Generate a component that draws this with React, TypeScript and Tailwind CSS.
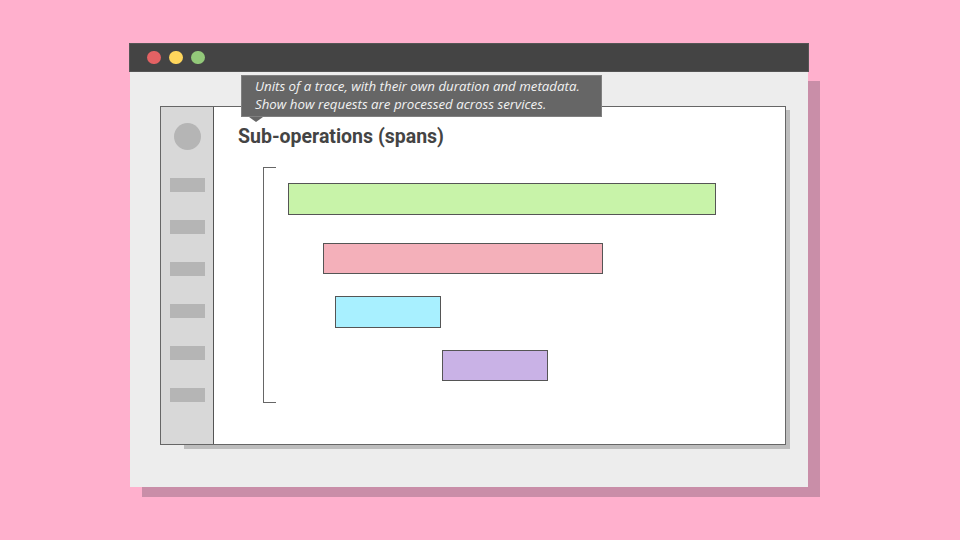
const navItems = [0, 1, 2, 3, 4, 5];

function App() {
  return (
    <div className="relative w-[960px] h-[540px] overflow-hidden bg-[#ffb0cd] pt-[43px] pl-[130px]">
      {/* Browser window */}
      <div className="relative w-[678px] h-[444px]">
        <div className="absolute left-[12px] top-[38px] w-[678px] h-[416px] bg-[#c98ea8]" />
        <div className="relative flex items-center gap-[8.5px] h-[29px] -mx-px pl-[17px] bg-[#444444] border border-[#555555]">
          <span className="w-[13.5px] h-[13.5px] rounded-full bg-[#e46264]" />
          <span className="w-[13.5px] h-[13.5px] rounded-full bg-[#ffd65c]" />
          <span className="w-[13.5px] h-[13.5px] rounded-full bg-[#93c97a]" />
        </div>

        <div className="relative h-[415px] bg-[#ededed] pt-[34px] pl-[30px]">
          {/* Card */}
          <div className="relative w-[627px] h-[340px]">
            <div className="absolute left-[24px] top-[4px] w-[606px] h-[339px] bg-[#bdbdbd]" />
            <div className="relative flex w-[626px] h-[339px] bg-white border border-[#666666]">
              <div className="flex flex-col items-center w-[53px] shrink-0 bg-[#d8d8d8] border-r border-[#555555]">
                <span className="w-[27px] h-[27px] mt-[16px] mb-[28px] rounded-full bg-[#b5b5b5]" />
                <div className="flex flex-col gap-[28px]">
                  {navItems.map((i) => (
                    <span key={i} className="block w-[35px] h-[14px] bg-[#b5b5b5]" />
                  ))}
                </div>
              </div>

              <div className="flex-1 pl-[24px]">
                <h1 className="mt-[17px] h-[26px] text-[19.5px] leading-[26px] font-bold text-[#444444] font-['Roboto',sans-serif]">
                  Sub-operations (spans)
                </h1>
                <div className="flex mt-[17px] ml-[25px]">
                  {/* Bracket */}
                  <div className="w-[13px] h-[236px] shrink-0 border-l border-t border-b border-[#666666]" />
                  <div className="flex flex-col pt-[16px] pl-[12px]">
                    <div className="w-[428px] h-[32px] bg-[#c8f3a9] border border-[#555555]" />
                    <div className="w-[280px] h-[31px] mt-[28px] ml-[35px] bg-[#f4b0ba] border border-[#555555]" />
                    <div className="w-[106px] h-[32px] mt-[22px] ml-[47px] bg-[#a8f0ff] border border-[#555555]" />
                    <div className="w-[106px] h-[31px] mt-[22px] ml-[154px] bg-[#c9b2e6] border border-[#555555]" />
                  </div>
                </div>
              </div>
            </div>
          </div>
        </div>

        {/* Tooltip */}
        <div className="absolute left-[111px] top-[32px] w-[361px] h-[42px] pl-[13px] pt-[1px] bg-[#666666] border border-[#808080] text-[13.3px] leading-[18px] italic text-[#f2f2f2] font-['Open_Sans',sans-serif]">
          <p>Units of a trace, with their own duration and metadata.</p>
          <p>Show how requests are processed across services.</p>
          <span className="absolute left-[7px] top-[41px] w-0 h-0 border-l-[7px] border-r-[7px] border-t-[5px] border-l-transparent border-r-transparent border-t-[#666666]" />
        </div>
      </div>
    </div>
  );
}

export default App;
